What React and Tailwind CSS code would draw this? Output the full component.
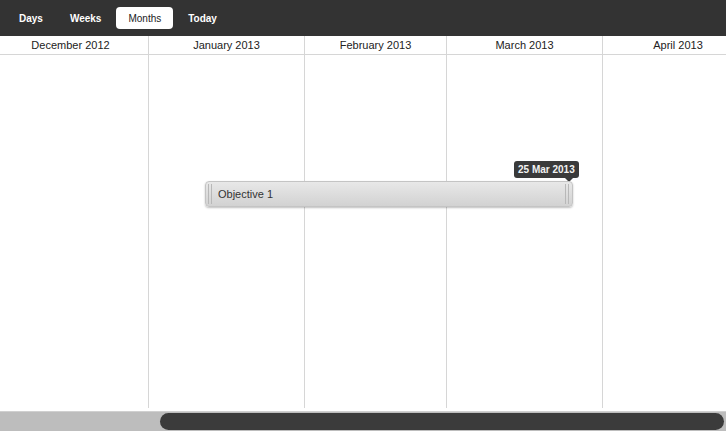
import React from "react";

const months = [
  { name: "December 2012", width: 156 },
  { name: "January 2013", width: 156 },
  { name: "February 2013", width: 142 },
  { name: "March 2013", width: 156 },
  { name: "April 2013", width: 151 },
];

const tabs = ["Days", "Weeks", "Months", "Today"];

function App() {
  return (
    <div
      className="w-[726px] h-[431px] flex flex-col overflow-hidden bg-white"
      style={{ fontFamily: '"Liberation Sans", Arial, sans-serif' }}
    >
      {/* toolbar */}
      <div className="h-9 bg-[#333333] flex items-center pl-[7px] gap-[3px]">
        {tabs.map((t) =>
          t === "Months" ? (
            <div
              key={t}
              className="h-[22px] px-[12px] flex items-center rounded-[4px] bg-white text-[10px] text-[#222]"
            >
              {t}
            </div>
          ) : (
            <div
              key={t}
              className="h-[22px] px-[12px] flex items-center text-[10px] font-bold text-white"
            >
              {t}
            </div>
          )
        )}
      </div>

      {/* timeline */}
      <div className="relative h-[372px] overflow-hidden">
        <div className="flex h-full -ml-[7px]">
          {months.map((m) => (
            <div
              key={m.name}
              className="flex flex-col shrink-0 border-r border-[#d6d6d6]"
              style={{ width: m.width }}
            >
              <div className="h-[19px] border-b border-[#d6d6d6] flex items-center justify-center text-[11px] text-[#222]">
                {m.name}
              </div>
              <div className="flex-1" />
            </div>
          ))}
        </div>

        {/* tooltip */}
        <div className="absolute left-[514px] top-[125px] h-[17px] px-[4px] flex items-center rounded-[3px] bg-[#3a3a3a] text-[10px] font-bold text-[#f2f2f2]">
          25 Mar 2013
          <div className="absolute right-[6px] -bottom-[4px] w-0 h-0 border-l-[4px] border-r-[4px] border-t-[4px] border-l-transparent border-r-transparent border-t-[#3a3a3a]" />
        </div>

        {/* objective bar */}
        <div className="absolute left-[205px] top-[145px] w-[368px] h-[26px] rounded-[4px] border border-[#c4c4c4] bg-gradient-to-b from-[#e8e8e8] to-[#d2d2d2] shadow-[0_1px_2px_rgba(0,0,0,0.25)] flex items-center">
          <div className="ml-[2px] h-[20px] w-[4px] border-l border-r border-[#b8b8b8]" />
          <div className="ml-[6px] text-[11px] text-[#333]">Objective 1</div>
          <div className="ml-auto mr-[3px] h-[20px] w-[4px] border-l border-r border-[#b8b8b8]" />
        </div>
      </div>

      <div className="h-[3px] bg-white" />

      {/* scrollbar */}
      <div className="h-5 bg-[#bdbdbd] border-t border-[#d0d0d0] flex items-center">
        <div className="ml-[160px] mr-[2px] flex-1 h-[17px] rounded-full bg-[#3b3b3b]" />
      </div>
    </div>
  );
}

export default App;
